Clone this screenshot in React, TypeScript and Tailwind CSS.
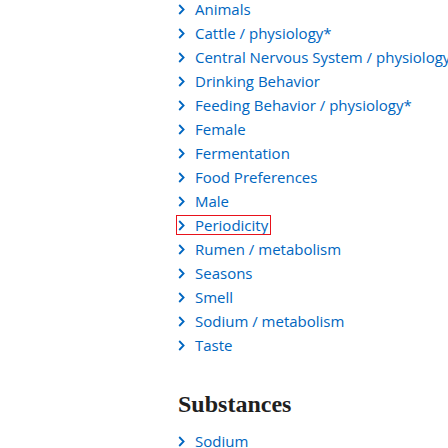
import React from "react";

const items = [
  "Animals",
  "Cattle / physiology*",
  "Central Nervous System / physiology",
  "Drinking Behavior",
  "Feeding Behavior / physiology*",
  "Female",
  "Fermentation",
  "Food Preferences",
  "Male",
  "Periodicity",
  "Rumen / metabolism",
  "Seasons",
  "Smell",
  "Sodium / metabolism",
  "Taste",
];

function Chevron() {
  return (
    <svg width="7" height="11" viewBox="0 0 7 11" className="shrink-0">
      <path d="M1.2 1 L5.6 5.5 L1.2 10" fill="none" stroke="#0066c0" strokeWidth="1.8" />
    </svg>
  );
}

function Row({ label, focused }: { label: string; focused?: boolean }) {
  return (
    <div className="h-[24px] flex items-center">
      <a
        className={
          "flex items-center gap-[10px] h-[18px] pl-[1px] pr-[2px] " +
          (focused ? "outline outline-1 outline-[#e8121b]" : "")
        }
      >
        <Chevron />
        <span className="whitespace-nowrap">{label}</span>
      </a>
    </div>
  );
}

export default function App() {
  return (
    <div className="w-[448px] h-[448px] overflow-hidden bg-white">
      <div
        className="pl-[177px] -mt-[3px] text-[15px] text-[#0066c0]"
        style={{ fontFamily: "'Open Sans', 'Noto Sans', sans-serif" }}
      >
        {items.map((it) => (
          <Row key={it} label={it} focused={it === "Periodicity"} />
        ))}
        <h2
          className="mt-[33px] pl-[1px] text-[24px] font-bold text-[#1f1f1f] leading-[28px]"
          style={{ fontFamily: "'Liberation Serif', serif" }}
        >
          Substances
        </h2>
        <div className="mt-[11px]">
          <Row label="Sodium" />
        </div>
      </div>
    </div>
  );
}
